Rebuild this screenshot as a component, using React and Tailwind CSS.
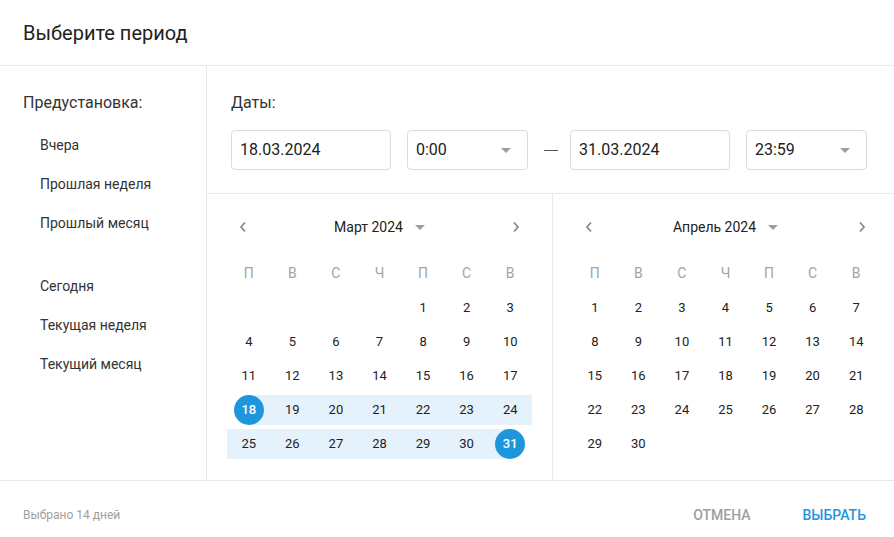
import React from 'react';

const WEEKDAYS = ['П', 'В', 'С', 'Ч', 'П', 'С', 'В'];
const PRESETS_PAST = ['Вчера', 'Прошлая неделя', 'Прошлый месяц'];
const PRESETS_NOW = ['Сегодня', 'Текущая неделя', 'Текущий месяц'];

const Caret = () => (
  <svg width="10" height="5" viewBox="0 0 10 5" className="shrink-0">
    <path d="M0 0 L10 0 L5 5 Z" fill="#9e9e9e" />
  </svg>
);

const Chevron = ({ dir }) => (
  <svg width="8" height="12" viewBox="0 0 8 12">
    <path d={dir === 'left' ? 'M6 1.5 L2 6 L6 10.5' : 'M2 1.5 L6 6 L2 10.5'} fill="none" stroke="#8a8a8a" strokeWidth="1.8" />
  </svg>
);

const TextInput = ({ value, width }) => (
  <div className={`h-10 ${width} flex items-center px-2 border border-[#dcdcdc] rounded text-base text-[#222]`}>{value}</div>
);

const SelectInput = ({ value }) => (
  <div className="h-10 w-[121px] flex items-center justify-between pl-2 pr-4 border border-[#dcdcdc] rounded text-base text-[#222]">
    <span>{value}</span>
    <Caret />
  </div>
);

// offset: empty cells before day 1 (Monday-first)
const buildWeeks = (offset, days) => {
  const cells = [];
  for (let i = 0; i < offset; i++) cells.push(null);
  for (let d = 1; d <= days; d++) cells.push(d);
  const weeks = [];
  for (let i = 0; i < cells.length; i += 7) weeks.push(cells.slice(i, i + 7));
  return weeks;
};

const DayCell = ({ day, range }) => {
  if (!day) return <div className="h-[30px]" />;
  const { from, to } = range || {};
  const inRange = range && day >= from && day <= to;
  const isEdge = range && (day === from || day === to);
  let band = '';
  if (inRange) {
    if (day === from && day === to) band = '';
    else if (day === from) band = 'bg-[linear-gradient(to_right,transparent_50%,#e5f2fb_50%)]';
    else if (day === to) band = 'bg-[linear-gradient(to_left,transparent_50%,#e5f2fb_50%)]';
    else band = 'bg-[#e5f2fb]';
  }
  return (
    <div className={`h-[30px] flex items-center justify-center ${band}`}>
      {isEdge ? (
        <span className="w-[30px] h-[30px] rounded-full bg-[#1e96dc] text-white font-medium flex items-center justify-center">{day}</span>
      ) : (
        <span>{day}</span>
      )}
    </div>
  );
};

const Month = ({ title, offset, days, range, className }) => {
  const weeks = buildWeeks(offset, days);
  return (
    <div className={className}>
      <div className="h-[66px] flex items-center justify-between px-3 pb-1 pt-1">
        <Chevron dir="left" />
        <div className="flex items-center gap-3 text-sm text-[#222]">
          <span>{title}</span>
          <Caret />
        </div>
        <Chevron dir="right" />
      </div>
      <div className="grid grid-cols-7 text-sm text-[#a3a3a3] h-[26px] items-center">
        {WEEKDAYS.map((w, i) => <div key={i} className="text-center">{w}</div>)}
      </div>
      <div className="flex flex-col gap-1 mt-[7px] text-[13px] text-[#222]">
        {weeks.map((wk, i) => (
          <div key={i} className="grid grid-cols-7">
            {Array.from({ length: 7 }).map((_, j) => (
              <DayCell key={j} day={wk[j] || null} range={range} />
            ))}
          </div>
        ))}
      </div>
    </div>
  );
};

export default function App() {
  return (
    <div className="w-[894px] h-[537px] bg-white flex flex-col text-[#222]" style={{ fontFamily: 'Roboto, "Noto Sans", sans-serif' }}>
      <div className="h-[66px] shrink-0 flex items-center px-[23px] border-b border-[#e8e8e8]">
        <h1 className="text-xl text-[#222] pt-[1px]">Выберите период</h1>
      </div>

      <div className="flex h-[415px] border-b border-[#e8e8e8]">
        <aside className="w-[207px] shrink-0 border-r border-[#e8e8e8] pl-[23px] pt-[25px]">
          <div className="text-base text-[#333]">Предустановка:</div>
          <ul className="mt-[20px] pl-[17px] text-sm text-[#333] flex flex-col gap-[19px]">
            {PRESETS_PAST.map(p => <li key={p} className="leading-5">{p}</li>)}
            <li className="h-[5px]" />
            {PRESETS_NOW.map(p => <li key={p} className="leading-5">{p}</li>)}
          </ul>
        </aside>

        <main className="flex-1 flex flex-col">
          <div className="h-[128px] shrink-0 border-b border-[#e8e8e8] pl-6 pt-[25px]">
            <div className="text-base text-[#333]">Даты:</div>
            <div className="flex items-center mt-[15px]">
              <TextInput value="18.03.2024" width="w-[160px]" />
              <div className="ml-4"><SelectInput value="0:00" /></div>
              <span className="w-[42px] flex justify-center pl-1"><span className="w-[14px] h-px bg-[#555]" /></span>
              <TextInput value="31.03.2024" width="w-[160px]" />
              <div className="ml-4"><SelectInput value="23:59" /></div>
            </div>
          </div>
          <div className="flex flex-1">
            <Month title="Март 2024" offset={4} days={31} range={{ from: 18, to: 31 }} className="w-[346px] shrink-0 border-r border-[#e8e8e8] px-5" />
            <Month title="Апрель 2024" offset={0} days={30} className="w-[341px] shrink-0 pl-5 pr-4" />
          </div>
        </main>
      </div>

      <footer className="flex-1 flex items-center justify-between pl-[23px] pr-7 pt-3">
        <span className="text-xs text-[#9e9e9e]">Выбрано 14 дней</span>
        <div className="flex items-center gap-[52px] text-sm font-medium">
          <button className="text-[#9e9e9e] uppercase">ОТМЕНА</button>
          <button className="text-[#1e96dc] uppercase">ВЫБРАТЬ</button>
        </div>
      </footer>
    </div>
  );
}
